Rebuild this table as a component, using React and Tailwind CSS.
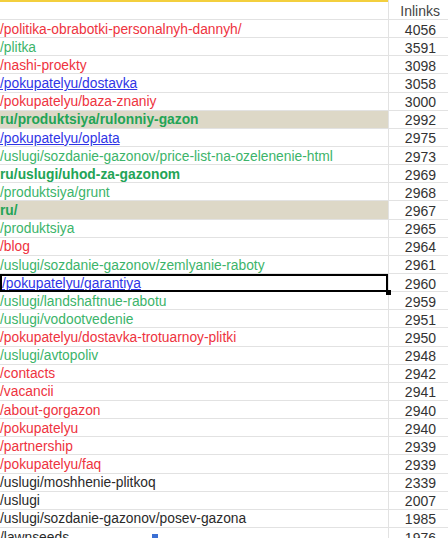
import React from "react";

const RED = "text-[#ee3340]";
const GREEN = "text-[#3cb46a]";
const BOLD_GREEN = "text-[#23a456] font-bold";
const BLUE = "text-[#2f35e6] underline";
const DARK = "text-[#2a2a2a]";

const rows = [
  { url: "/politika-obrabotki-personalnyh-dannyh/", tone: RED, n: 4056 },
  { url: "/plitka", tone: GREEN, n: 3591 },
  { url: "/nashi-proekty", tone: RED, n: 3098 },
  { url: "/pokupatelyu/dostavka", tone: BLUE, n: 3058 },
  { url: "/pokupatelyu/baza-znaniy", tone: RED, n: 3000 },
  { url: "ru/produktsiya/rulonniy-gazon", tone: BOLD_GREEN, n: 2992, shade: true },
  { url: "/pokupatelyu/oplata", tone: BLUE, n: 2975 },
  { url: "/uslugi/sozdanie-gazonov/price-list-na-ozelenenie-html", tone: GREEN, n: 2973 },
  { url: "ru/uslugi/uhod-za-gazonom", tone: BOLD_GREEN, n: 2969 },
  { url: "/produktsiya/grunt", tone: GREEN, n: 2968 },
  { url: "ru/", tone: BOLD_GREEN, n: 2967, shade: true },
  { url: "/produktsiya", tone: GREEN, n: 2965 },
  { url: "/blog", tone: RED, n: 2964 },
  { url: "/uslugi/sozdanie-gazonov/zemlyanie-raboty", tone: GREEN, n: 2961 },
  { url: "/pokupatelyu/garantiya", tone: BLUE, n: 2960, selected: true },
  { url: "/uslugi/landshaftnue-rabotu", tone: GREEN, n: 2959 },
  { url: "/uslugi/vodootvedenie", tone: GREEN, n: 2951 },
  { url: "/pokupatelyu/dostavka-trotuarnoy-plitki", tone: RED, n: 2950 },
  { url: "/uslugi/avtopoliv", tone: GREEN, n: 2948 },
  { url: "/contacts", tone: RED, n: 2942 },
  { url: "/vacancii", tone: RED, n: 2941 },
  { url: "/about-gorgazon", tone: RED, n: 2940 },
  { url: "/pokupatelyu", tone: RED, n: 2940 },
  { url: "/partnership", tone: RED, n: 2939 },
  { url: "/pokupatelyu/faq", tone: RED, n: 2939 },
  { url: "/uslugi/moshhenie-plitkoq", tone: DARK, n: 2339 },
  { url: "/uslugi", tone: DARK, n: 2007 },
  { url: "/uslugi/sozdanie-gazonov/posev-gazona", tone: DARK, n: 1985 },
  { url: "/lawnseeds", tone: DARK, n: 1976 },
];

const Row = ({ url, tone, n, shade, selected }) => (
  <div className="flex h-[18.15px] shrink-0">
    <div
      className={`w-[388px] shrink-0 flex items-center pt-[2px] whitespace-nowrap overflow-hidden box-border text-[13.8px] ${
        shade ? "bg-[#ddd8c7]" : ""
      } ${selected ? "border-2 border-black" : "border-b border-[#e2e2e2]"} ${tone}`}
    >
      <span className="leading-none">{url}</span>
    </div>
    <div className="w-[60px] shrink-0 flex items-center justify-end pt-[2px] pr-[12px] border-l border-b border-[#e2e2e2] box-border text-[14px] text-[#333]">
      <span className="leading-none">{n}</span>
    </div>
    {selected && <div className="absolute left-[386px] mt-[16px] w-[5px] h-[5px] bg-black" />}
  </div>
);

export default function App() {
  return (
    <div
      className="relative w-[448px] h-[538px] overflow-hidden bg-white"
      style={{ fontFamily: '"Liberation Sans", Arial, sans-serif' }}
    >
      <div className="flex h-[20px]">
        <div className="w-[388px] shrink-0 border-t-2 border-[#f3cf3e] border-b border-b-[#e2e2e2] box-border" />
        <div className="w-[60px] shrink-0 flex items-center justify-end pt-[2px] pr-[8px] border-l border-b border-[#e2e2e2] box-border text-[14px] text-[#444]">
          <span className="leading-none">Inlinks</span>
        </div>
      </div>
      <div className="flex flex-col">
        {rows.map((r) => (
          <Row key={r.url} {...r} />
        ))}
      </div>
      <div className="absolute left-[152px] top-[534px] w-[6px] h-[6px] bg-[#3b6fd4]" />
    </div>
  );
}
